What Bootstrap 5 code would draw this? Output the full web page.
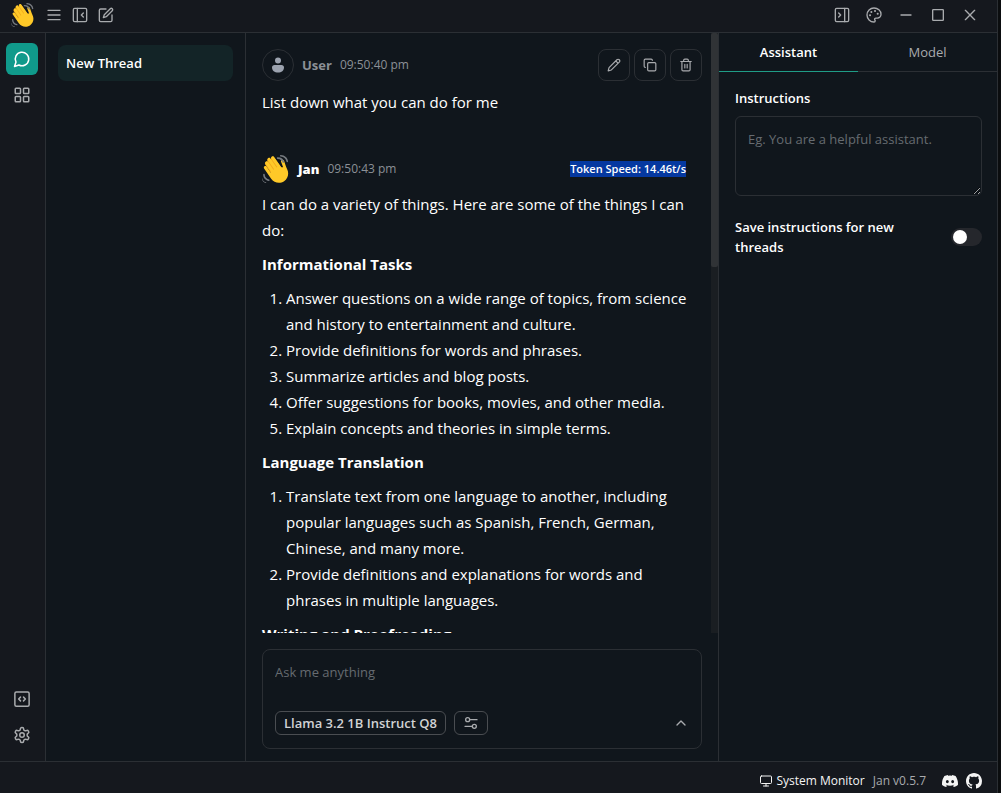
<!DOCTYPE html>
<html lang="en" data-bs-theme="dark">
<head>
<meta charset="utf-8">
<meta name="viewport" content="width=device-width, initial-scale=1">
<title>Jan</title>
<link href="https://cdn.jsdelivr.net/npm/bootstrap@5.3.0/dist/css/bootstrap.min.css" rel="stylesheet">
<style>
:root { --bar: #15181e; --pane: #10161c; --line: #2b2f34; --dim: #8b9096; --icon: #a9abae; --accent: #109a8b; }
body { font-family: "Open Sans", "Noto Sans", sans-serif; font-size: 13px; line-height: 20px; color: #fff; background: #0b0d0f; }
.app { height: 100vh; background: var(--pane); border-right: 1px solid var(--line); margin-right: 3px; }
.line-t { border-top: 1px solid var(--line); }
.line-b { border-bottom: 1px solid var(--line); }
.line-s { border-left: 1px solid var(--line); }
.line-e { border-right: 1px solid var(--line); }
.topbar { height: 33px; background: var(--bar); padding: 0 19px 2px 11px; }
.statusbar { min-height: 32px; background: var(--bar); padding: 6px 15px 0; font-size: 12px; }
.statusbar a { color: #f4f4f4; }
.rail { width: 46px; background: var(--bar); padding: 10px 6px; }
.threads { width: 200px; padding: 12px; }
.side { width: 279px; }
.side-body { padding: 16px 15px 16px 16px; }
.ico { display: block; width: 16px; height: 16px; fill: none; stroke: currentColor; stroke-width: 2; stroke-linecap: round; stroke-linejoin: round; }
.ico-lg { width: 18px; height: 18px; }
.ico-sm { width: 12px; height: 12px; }
.solid { fill: currentColor; stroke: none; }
.wave { display: block; width: 24px; height: 24px; }
.wave-lg { width: 28px; height: 28px; }
.bare { display: flex; padding: 0; border: 0; background: none; color: var(--icon); }
.top-tools { gap: 10px; margin-left: 11px; }
.rail-btn { width: 32px; height: 32px; align-items: center; justify-content: center; border-radius: 6px; }
.rail-btn.current { background: var(--accent); color: #fff; }
.thread-item { display: block; padding: 8px; border-radius: 8px; background: #132427; color: #fff; font-weight: 600; text-decoration: none; }
.avatar { width: 32px; height: 32px; border: 1px solid var(--line); border-radius: 50%; color: #9ca3af; }
.tool { width: 32px; height: 32px; border: 1px solid var(--line); border-radius: 8px; align-items: center; justify-content: center; }
.tool .ico { width: 14px; height: 14px; }
.who { font-size: 13px; font-weight: 800; }
.who-user, .stamp { color: var(--dim); }
.who-user { font-weight: 700; }
.stamp { font-size: 12px; font-weight: 500; }
.speed { font-size: 11px; line-height: 16px; font-weight: 600; background: #0538a0; margin-right: 16px; }
.prose { font-size: 15px; line-height: 26px; }
.prose p, .prose ol, .prose h2 { margin: 0 0 8px; font-size: 15px; line-height: 26px; }
.prose h2 { font-weight: 700; }
.prose ol { padding-left: 24px; }
.body-row, .pane-row { min-height: 0; }
.chat { min-width: 0; }
.scroller { scrollbar-width: none; padding: 16px 9px 0 16px; }
.scroller::-webkit-scrollbar { display: none; }
.message-user { margin-bottom: 40px; }
.track { width: 7px; background: #1a1e22; }
.thumb { height: 39%; background: #303336; border-radius: 2px; }
.composer { margin: 16px 16px 12px; padding: 12px 12px 13px; border: 1px solid var(--line); border-radius: 8px; min-height: 100px; }
.field { border: 0; background: none; color: #fff; padding: 0; outline: 0; resize: none; display: block; width: 100%; }
.field::placeholder, .prompt::placeholder { color: #666b70; opacity: 1; }
.chip { height: 24px; padding: 0 8px; align-items: center; justify-content: center; border: 1px solid #4a4d51; border-radius: 6px; color: #d0d2d4; font-weight: 600; font-size: 13px; line-height: 22px; }
.chip-icon { width: 34px; color: var(--icon); }
.tabs { height: 39px; }
.tab-btn { flex: 1; justify-content: center; align-items: center; font-size: 13px; border-bottom: 1px solid var(--line); }
.tab-btn.current { color: #fff; font-weight: 600; border-bottom-color: #1f9c86; }
.prompt { display: block; width: 100%; height: 80px; padding: 12px; border: 1px solid var(--line); border-radius: 6px; background: none; color: #fff; }
.strong-label { font-weight: 600; }
.save-row { margin-top: 21px; }
.monitor { color: #f4f4f4; font-weight: 500; align-items: center; }
.version { color: var(--icon); }
.switch { appearance: none; width: 31px; height: 18px; margin: 0; border-radius: 9px; background: #25272c; padding: 2px; flex: none; }
.switch::before { content: ""; display: block; width: 14px; height: 14px; border-radius: 50%; background: #fff; }
.switch:checked { background: var(--accent); padding-left: 15px; }
</style>
</head>
<body>
<svg class="d-none" aria-hidden="true">
  <symbol id="wave" viewBox="0 0 36 36">
    <path fill="#f2a81d" d="M4.861 9.147c.94-.657 2.357-.531 3.201.166l-.968-1.407c-.779-1.111-.5-2.313.612-3.093 1.112-.777 4.263 1.312 4.263 1.312-.786-1.122-.639-2.544.483-3.331 1.122-.784 2.67-.513 3.456.611l10.42 14.72L25 31l-11.083-4.042L4.25 12.625c-.793-1.129-.519-2.686.611-3.478z"/>
    <path fill="#ffc928" d="M2.695 17.336s-1.132-1.65.519-2.781c1.649-1.131 2.78.518 2.78.518l5.251 7.658c.181-.302.379-.6.6-.894L4.557 11.21s-1.131-1.649.519-2.78c1.649-1.131 2.78.518 2.78.518l6.855 9.997c.255-.208.516-.417.785-.622L7.549 6.732s-1.131-1.649.519-2.78c1.649-1.131 2.78.518 2.78.518l7.947 11.589c.292-.179.581-.334.871-.498L12.238 4.729s-1.131-1.649.518-2.78c1.649-1.131 2.78.518 2.78.518l7.854 11.454 1.194 1.742 2.592-.001L24.515 8.62s-.545-1.924 1.378-2.47c1.924-.545 2.47 1.379 2.47 1.379l1.685 5.004c.668 1.984 1.379 3.961 2.32 5.831 2.657 5.28 1.07 11.842-3.94 15.279-5.465 3.747-12.936 2.354-16.684-3.11L2.695 17.336z"/>
    <path fill="#777b80" d="M9 31.500C5.500 30.500 3.500 28 3.500 25c0-.553-.405-1-.958-1s-1.042.447-1.042 1C1.500 29.500 4.500 32.500 8.700 33.400 9.900 33.600 10.200 31.900 9 31.500zM5 35c-3-.7-4.200-2.300-4.600-4.400-.2-1.200-1-.6-.4 1 .8 2.400 2.500 3.800 4.800 4.300 1 .1 1.200-.7.2-.9zM20 3c-.552 0-1 .448-1 1s.448 1 1 1c4 0 6 2.500 6.500 4.500.2 1 2.200.7 2-.5C27.700 5.500 25 3 20 3zm4-3c-.553 0-1 .448-1 1s.447 1 1 1c4.500.5 7 3 7.500 6.500.1 1 2 1 2-.2C33 3.500 29.500.3 24 0z"/>
  </symbol>
</svg>
<div class="app d-flex flex-column">
  <header class="topbar line-b d-flex align-items-center justify-content-between flex-shrink-0">
    <div class="d-flex align-items-center">
      <svg class="wave"><use href="#wave"/></svg>
      <div class="top-tools d-flex align-items-center">
        <button class="bare" aria-label="Menu"><svg class="ico" viewBox="0 0 24 24"><path d="M3 5h18M3 12h18M3 19h18"/></svg></button>
        <button class="bare" aria-label="Collapse threads"><svg class="ico" viewBox="0 0 24 24"><rect x="2" y="2" width="20" height="20" rx="2"/><path d="M8 2v20M17 15l-3-3 3-3"/></svg></button>
        <button class="bare" aria-label="New thread"><svg class="ico" viewBox="0 0 24 24"><path d="M12 3H4a2 2 0 0 0-2 2v15a2 2 0 0 0 2 2h15a2 2 0 0 0 2-2v-8"/><path d="M18.400 2.600a2.100 2.100 0 0 1 3 3L12.400 14.600 8 16l1.400-4.400z"/></svg></button>
      </div>
    </div>
    <div class="d-flex align-items-center gap-3">
      <button class="bare" aria-label="Collapse settings"><svg class="ico" viewBox="0 0 24 24"><rect x="2" y="2" width="20" height="20" rx="2"/><path d="M16 2v20M7 9l3 3-3 3"/></svg></button>
      <button class="bare" aria-label="Theme"><svg class="ico" viewBox="0 0 24 24"><path d="M12 1.500a10.500 10.500 0 1 0 0 21c1.100 0 1.800-.8 1.800-1.800 0-.5-.2-.9-.5-1.200-.3-.3-.4-.7-.4-1.200a1.700 1.700 0 0 1 1.700-1.700h2.400c3 0 5.500-2.500 5.500-5.600C22.500 5.700 17.800 1.500 12 1.500z"/><path d="M6 12.500h.1M8 7.500h.1M13.500 6h.1M17.500 10h.1" stroke-width="3"/></svg></button>
      <button class="bare" aria-label="Minimize"><svg class="ico" viewBox="0 0 24 24"><path d="M4.500 12h15"/></svg></button>
      <button class="bare" aria-label="Maximize"><svg class="ico" viewBox="0 0 24 24"><rect x="4" y="4" width="16" height="16" rx="1"/></svg></button>
      <button class="bare" aria-label="Close"><svg class="ico" viewBox="0 0 24 24"><path d="M5 5l14 14M19 5L5 19"/></svg></button>
    </div>
  </header>

  <div class="body-row d-flex flex-grow-1">
    <nav class="rail line-e d-flex flex-column justify-content-between flex-shrink-0">
      <div class="d-flex flex-column gap-1">
        <button class="bare rail-btn current" aria-label="Threads"><svg class="ico ico-lg" viewBox="0 0 24 24"><path d="M7.900 20A9 9 0 1 0 4 16.100L2 22Z"/></svg></button>
        <button class="bare rail-btn" aria-label="Hub"><svg class="ico ico-lg" viewBox="0 0 24 24"><rect x="3" y="3" width="7" height="7" rx="1"/><rect x="14" y="3" width="7" height="7" rx="1"/><rect x="14" y="14" width="7" height="7" rx="1"/><rect x="3" y="14" width="7" height="7" rx="1"/></svg></button>
      </div>
      <div class="d-flex flex-column gap-1">
        <button class="bare rail-btn" aria-label="Local API server"><svg class="ico ico-lg" viewBox="0 0 24 24"><rect x="2.500" y="2.500" width="19" height="19" rx="2"/><path d="M10 9.500 7.500 12l2.500 2.500M14 9.500l2.500 2.500-2.500 2.500"/></svg></button>
        <button class="bare rail-btn" aria-label="Settings"><svg class="ico ico-lg" viewBox="0 0 24 24"><path d="M12.220 2h-.44a2 2 0 0 0-2 2v.18a2 2 0 0 1-1 1.730l-.43.25a2 2 0 0 1-2 0l-.15-.08a2 2 0 0 0-2.730.73l-.22.38a2 2 0 0 0 .73 2.730l.15.1a2 2 0 0 1 1 1.720v.51a2 2 0 0 1-1 1.740l-.15.09a2 2 0 0 0-.73 2.730l.22.38a2 2 0 0 0 2.730.73l.15-.08a2 2 0 0 1 2 0l.43.25a2 2 0 0 1 1 1.730V20a2 2 0 0 0 2 2h.44a2 2 0 0 0 2-2v-.18a2 2 0 0 1 1-1.730l.43-.25a2 2 0 0 1 2 0l.15.08a2 2 0 0 0 2.730-.73l.22-.39a2 2 0 0 0-.73-2.730l-.15-.08a2 2 0 0 1-1-1.740v-.5a2 2 0 0 1 1-1.740l.15-.09a2 2 0 0 0 .73-2.730l-.22-.38a2 2 0 0 0-2.730-.73l-.15.08a2 2 0 0 1-2 0l-.43-.25a2 2 0 0 1-1-1.730V4a2 2 0 0 0-2-2z"/><circle cx="12" cy="12" r="3"/></svg></button>
      </div>
    </nav>

    <aside class="threads line-e flex-shrink-0">
      <a class="thread-item" href="#">New Thread</a>
    </aside>

    <main class="chat d-flex flex-column flex-grow-1">
      <div class="pane-row d-flex flex-grow-1">
        <div class="scroller flex-grow-1 overflow-auto">
          <article class="message-user">
            <div class="d-flex align-items-center gap-2">
              <span class="avatar d-flex align-items-center justify-content-center"><svg class="ico solid" viewBox="0 0 16 16"><circle cx="8" cy="3.500" r="3"/><path d="M2 10.500C2 9 3 8 4.500 8h7C13 8 14 9 14 10.500c0 3-2.500 5-6 5s-6-2-6-5z"/></svg></span>
              <span class="who who-user">User</span>
              <span class="stamp">09:50:40 pm</span>
              <div class="d-flex gap-1 ms-auto">
                <button class="bare tool" aria-label="Edit"><svg class="ico" viewBox="0 0 24 24"><path d="M17 3a2.800 2.800 0 0 1 4 4L7.500 20.500 2 22l1.500-5.500zM15 5l4 4"/></svg></button>
                <button class="bare tool" aria-label="Copy"><svg class="ico" viewBox="0 0 24 24"><rect x="8" y="8" width="14" height="14" rx="2"/><path d="M4 16a2 2 0 0 1-2-2V4a2 2 0 0 1 2-2h10a2 2 0 0 1 2 2"/></svg></button>
                <button class="bare tool" aria-label="Delete"><svg class="ico" viewBox="0 0 24 24"><path d="M3 6h18M19 6v14a2 2 0 0 1-2 2H7a2 2 0 0 1-2-2V6M8 6V4a2 2 0 0 1 2-2h4a2 2 0 0 1 2 2v2M10 11v6M14 11v6"/></svg></button>
              </div>
            </div>
            <div class="prose mt-2"><p>List down what you can do for me</p></div>
          </article>
          <article>
            <div class="d-flex align-items-center gap-2">
              <svg class="wave wave-lg"><use href="#wave"/></svg>
              <span class="who">Jan</span>
              <span class="stamp">09:50:43 pm</span>
              <span class="speed ms-auto">Token Speed: 14.46t/s</span>
            </div>
            <div class="prose mt-2">
              <p>I can do a variety of things. Here are some of the things I can do:</p>
              <h2>Informational Tasks</h2>
              <ol>
                <li>Answer questions on a wide range of topics, from science and history to entertainment and culture.</li>
                <li>Provide definitions for words and phrases.</li>
                <li>Summarize articles and blog posts.</li>
                <li>Offer suggestions for books, movies, and other media.</li>
                <li>Explain concepts and theories in simple terms.</li>
              </ol>
              <h2>Language Translation</h2>
              <ol>
                <li>Translate text from one language to another, including popular languages such as Spanish, French, German, Chinese, and many more.</li>
                <li>Provide definitions and explanations for words and phrases in multiple languages.</li>
              </ol>
              <h2>Writing and Proofreading</h2>
            </div>
          </article>
        </div>
        <div class="track flex-shrink-0"><div class="thumb"></div></div>
      </div>
      <form class="composer d-flex flex-column justify-content-between flex-shrink-0">
        <textarea class="field" rows="1" aria-label="Message" placeholder="Ask me anything"></textarea>
        <div class="d-flex align-items-center gap-2">
          <button type="button" class="bare chip">Llama 3.2 1B Instruct Q8</button>
          <button type="button" class="bare chip chip-icon" aria-label="Model settings"><svg class="ico" viewBox="0 0 24 24"><path d="M11 7h10M3 17h10"/><circle cx="7" cy="7" r="3"/><circle cx="17" cy="17" r="3"/></svg></button>
          <button type="button" class="bare ms-auto" aria-label="Expand"><svg class="ico" viewBox="0 0 24 24"><path d="m6 15 6-6 6 6"/></svg></button>
        </div>
      </form>
    </main>

    <aside class="side line-s flex-shrink-0">
      <div class="tabs d-flex" role="tablist">
        <button class="bare tab-btn current" role="tab" aria-selected="true">Assistant</button>
        <button class="bare tab-btn" role="tab" aria-selected="false">Model</button>
      </div>
      <div class="side-body">
        <label class="strong-label d-block mb-2" for="instructions">Instructions</label>
        <textarea class="prompt" id="instructions" placeholder="Eg. You are a helpful assistant."></textarea>
        <div class="save-row d-flex align-items-center justify-content-between gap-5">
          <label class="strong-label" for="save">Save instructions for new threads</label>
          <input class="switch" type="checkbox" role="switch" id="save">
        </div>
      </div>
    </aside>
  </div>

  <footer class="statusbar line-t d-flex align-items-center justify-content-end gap-2 flex-shrink-0">
    <button class="bare monitor gap-1"><svg class="ico ico-sm" viewBox="0 0 24 24"><rect x="1" y="2" width="22" height="15" rx="2"/><path d="M7 22h10M12 17v5"/></svg>System Monitor</button>
    <span class="version">Jan v0.5.7</span>
    <a class="ms-2" href="#" aria-label="Discord"><svg class="ico solid" viewBox="0 0 16 16"><path d="M13.545 2.907a13.200 13.200 0 0 0-3.257-1.011.05.05 0 0 0-.052.025c-.141.25-.297.577-.406.833a12.200 12.200 0 0 0-3.658 0 8 8 0 0 0-.412-.833.05.05 0 0 0-.052-.025c-1.125.194-2.220.534-3.257 1.011a.04.04 0 0 0-.021.018C.356 6.024-.213 9.047.066 12.032q.003.022.021.037a13.300 13.300 0 0 0 3.995 2.020.05.05 0 0 0 .056-.019q.463-.63.818-1.329a.05.05 0 0 0-.01-.059l-.018-.011a9 9 0 0 1-1.248-.595.05.05 0 0 1-.02-.066l.015-.019q.127-.095.248-.195a.05.05 0 0 1 .051-.007c2.619 1.196 5.454 1.196 8.041 0a.05.05 0 0 1 .053.007q.121.1.248.195a.05.05 0 0 1-.004.085 8 8 0 0 1-1.249.594.05.05 0 0 0-.03.03.05.05 0 0 0 .003.041c.24.465.515.909.817 1.329a.05.05 0 0 0 .056.019 13.200 13.200 0 0 0 4.001-2.020.05.05 0 0 0 .021-.037c.334-3.451-.559-6.449-2.366-9.106a.03.03 0 0 0-.02-.019m-8.198 7.307c-.789 0-1.438-.724-1.438-1.612s.637-1.613 1.438-1.613c.807 0 1.450.73 1.438 1.613 0 .888-.637 1.612-1.438 1.612m5.316 0c-.788 0-1.438-.724-1.438-1.612s.637-1.613 1.438-1.613c.807 0 1.451.73 1.438 1.613 0 .888-.631 1.612-1.438 1.612"/></svg></a>
    <a href="#" aria-label="GitHub"><svg class="ico solid" viewBox="0 0 16 16"><path d="M8 0C3.580 0 0 3.580 0 8c0 3.540 2.290 6.530 5.470 7.590.4.07.55-.17.55-.38 0-.19-.01-.82-.01-1.490-2.010.37-2.530-.49-2.690-.94-.09-.23-.48-.94-.82-1.130-.28-.15-.68-.52-.01-.53.63-.01 1.080.58 1.230.82.72 1.210 1.870.87 2.330.66.07-.52.28-.87.51-1.070-1.780-.2-3.640-.89-3.640-3.950 0-.87.31-1.590.82-2.150-.08-.2-.36-1.020.08-2.120 0 0 .67-.21 2.200.82.64-.18 1.320-.27 2-.27s1.360.09 2 .27c1.530-1.040 2.200-.82 2.200-.82.44 1.100.16 1.920.08 2.120.51.56.82 1.270.82 2.150 0 3.070-1.870 3.750-3.650 3.950.29.25.54.73.54 1.480 0 1.070-.01 1.930-.01 2.200 0 .21.15.46.55.38A8.010 8.010 0 0 0 16 8c0-4.420-3.580-8-8-8"/></svg></a>
  </footer>
</div>
<script src="https://cdn.jsdelivr.net/npm/bootstrap@5.3.0/dist/js/bootstrap.bundle.min.js"></script>
</body>
</html>
